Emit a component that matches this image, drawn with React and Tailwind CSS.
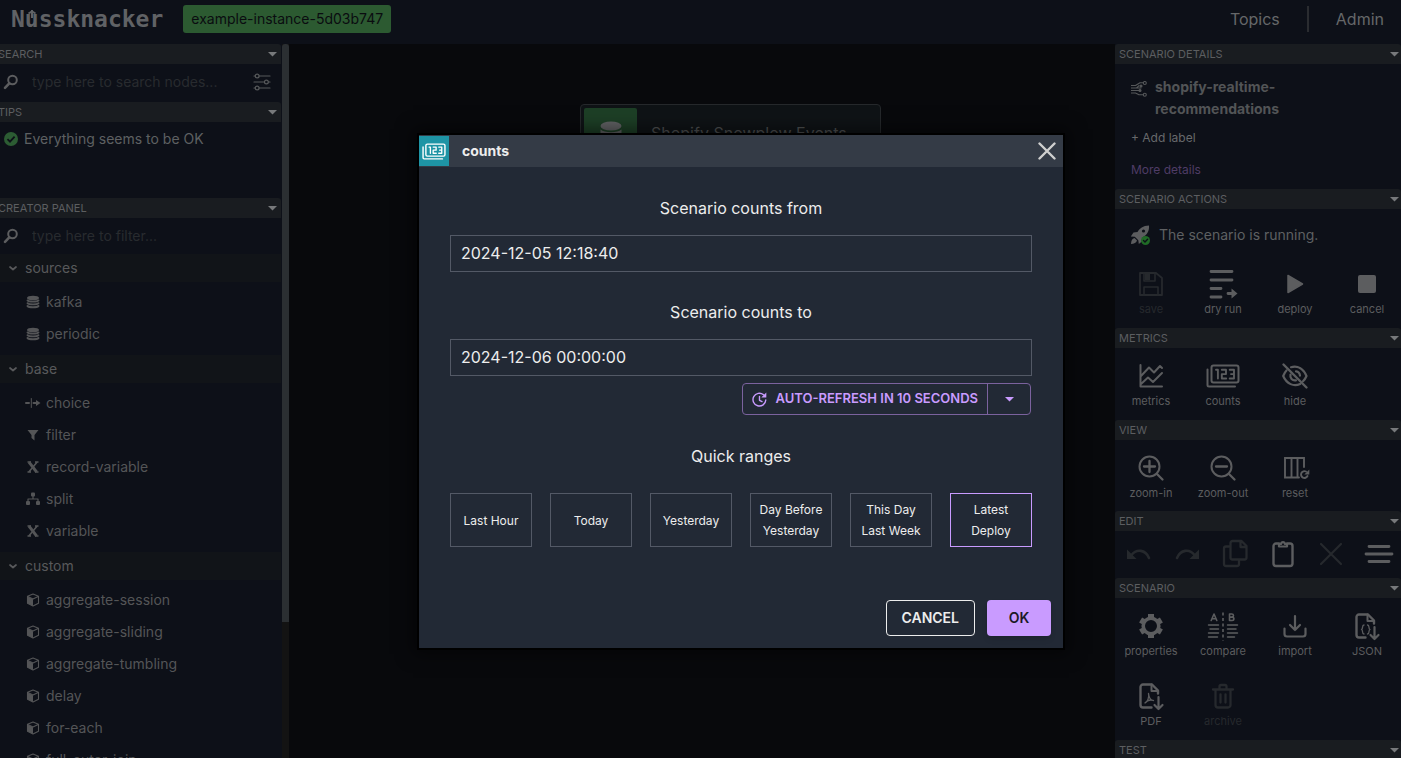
import React from "react";

const S = ({ size = 32, box = "0 0 32 32", children, className = "" }) => (
  <svg
    width={size}
    height={size}
    viewBox={box}
    fill="none"
    stroke="currentColor"
    strokeWidth="2"
    strokeLinecap="round"
    strokeLinejoin="round"
    aria-hidden="true"
    className={"shrink-0 " + className}
  >
    {children}
  </svg>
);

const Caret = ({ className = "" }) => (
  <svg width="9" height="5" viewBox="0 0 9 5" fill="currentColor" aria-hidden="true" className={"shrink-0 " + className}>
    <path d="M0 0h9L4.500 4.500z" />
  </svg>
);

const Magnifier = () => (
  <S size={16} box="0 0 16 16" className="text-[#5c5d5f]">
    <circle cx="9.500" cy="6" r="4.300" />
    <path d="M6.300 9.300 2 13.800" strokeWidth="2.600" />
  </S>
);

const icons = {
  database: (
    <S size={14} box="0 0 14 14">
      <ellipse cx="7" cy="3" rx="6" ry="2.300" fill="currentColor" stroke="none" />
      <path d="M1.500 5.400c1.500 1.600 9.500 1.600 11 0M1.500 8.200c1.500 1.600 9.500 1.600 11 0M1.500 11c1.500 1.600 9.500 1.600 11 0" strokeWidth="1.900" />
    </S>
  ),
  choice: (
    <S size={16} box="0 0 16 16">
      <path d="M1 8h3M8.500 8h4" strokeWidth="2" />
      <path d="M6.300 3.500v9" strokeWidth="1" />
      <path d="M11 5l4.500 3-4.500 3z" fill="currentColor" stroke="none" />
    </S>
  ),
  filter: (
    <S size={14} box="0 0 14 14">
      <path d="M1.500 2h11L8.500 7v5.500L5.500 10V7z" fill="currentColor" stroke="none" />
    </S>
  ),
  variable: (
    <S size={14} box="0 0 14 14">
      <path d="M3 2.200l7.500 9.600" strokeWidth="3" strokeLinecap="butt" />
      <path d="M11 2.200L3 11.800M1.500 2h3.500M9 2h3.500M1.500 12H5M9 12h3.500" strokeWidth="1.600" strokeLinecap="butt" />
    </S>
  ),
  split: (
    <S size={14} box="0 0 14 14">
      <g fill="currentColor" stroke="none">
        <rect x="5" y="0.500" width="4" height="4" rx="1" />
        <rect x="0" y="9" width="4" height="4" rx="1" />
        <rect x="10" y="9" width="4" height="4" rx="1" />
      </g>
      <path d="M7 4v3M2 9.500V7h10v2.500" strokeWidth="1.200" />
    </S>
  ),
  cube: (
    <S size={14} box="0 0 14 14">
      <path d="M7 1l5.500 2.300v6.900L7 13l-5.500-2.800V3.300zM1.800 3.600L7 6l5.200-2.400" strokeWidth="1.100" />
      <path d="M1.300 3.600L7 6.200V13l-5.700-2.800z" fill="currentColor" stroke="none" />
    </S>
  ),
  save: (
    <S>
      <path d="M5 5h16l6 5v17H5z" strokeWidth="1.800" />
      <path d="M9 5v8h11V5M9 27v-8h14v8" strokeWidth="1.600" />
      <path d="M10 6h5v6h-5z" fill="currentColor" stroke="none" />
    </S>
  ),
  dryrun: (
    <S>
      <path d="M4 3.500h21M4 12h21M4 20.500h10M4 29h10M21 25.500h5" strokeWidth="2.800" />
      <path d="M24.500 20.500l6 5-6 5z" fill="currentColor" stroke="none" />
    </S>
  ),
  deploy: (
    <S>
      <path d="M9 7.500v17L23.500 16z" fill="currentColor" strokeWidth="1.500" />
    </S>
  ),
  stop: (
    <S>
      <rect x="7" y="7" width="18" height="18" rx="2" fill="currentColor" stroke="none" />
    </S>
  ),
  metrics: (
    <S>
      <path d="M5.500 5v21.500H27M6 16l8-8.500 5 5L25 6l2 2M6 24l7-6.500 5 4.500 9-9" strokeWidth="2" />
    </S>
  ),
  hide: (
    <S>
      <path d="M4.500 4.500l23 23" strokeWidth="2.400" />
      <path d="M12 7.200c7-2 12.500 1.800 15.500 8.800-.8 2-2 3.800-3.500 5.200M7.500 10.500C6 12 5 13.800 4.200 16c3.500 8 10.500 11 17 8" strokeWidth="2.200" />
      <path d="M17 11.300a4.700 4.700 0 0 1 4 4.300M11.500 14.500c-.8 3.500 1.800 6.500 5.500 5.800" strokeWidth="2.200" />
    </S>
  ),
  zoomin: (
    <S>
      <circle cx="14.500" cy="14.500" r="10" />
      <path d="M22 22l5.500 5.500M9 14.500h11M14.500 9v11" strokeWidth="2.300" />
    </S>
  ),
  zoomout: (
    <S>
      <circle cx="14.500" cy="14.500" r="10" />
      <path d="M22 22l5.500 5.500M9 14.500h11" strokeWidth="2.300" />
    </S>
  ),
  reset: (
    <S>
      <path d="M20 25.500H6V6h19v9M12.500 6v19M18.500 6v19" strokeWidth="1.900" strokeLinejoin="miter" />
      <path d="M28.500 24a3.400 3.400 0 1 1-1.500-4.500" strokeWidth="1.900" />
      <path d="M30.300 17.500v5h-5z" fill="currentColor" stroke="none" />
    </S>
  ),
  undo: (
    <S>
      <path d="M8.500 17c5-6.500 14-5.500 17.500 3" strokeWidth="2.600" />
      <path d="M4 11.500v9.500h9.500z" fill="currentColor" stroke="none" />
    </S>
  ),
  redo: (
    <S>
      <path d="M23.500 17C18.500 10.500 9.500 11.500 6 20" strokeWidth="2.600" />
      <path d="M28 11.500v9.500h-9.500z" fill="currentColor" stroke="none" />
    </S>
  ),
  copy: (
    <S>
      <path d="M13.500 3h9l5 5v11.500a2 2 0 0 1-2 2h-12a2 2 0 0 1-2-2V5a2 2 0 0 1 2-2zM21.500 3.500v5.500H27" strokeWidth="2.300" />
      <path d="M10.500 8.500H7a2 2 0 0 0-2 2V26a2 2 0 0 0 2 2h11a2 2 0 0 0 2-2v-3.500" strokeWidth="2.300" />
    </S>
  ),
  paste: (
    <S>
      <path d="M12 5.500H9a2.500 2.500 0 0 0-2.500 2.500v17.500A2.500 2.500 0 0 0 9 28h14a2.500 2.500 0 0 0 2.500-2.500V8A2.500 2.500 0 0 0 23 5.500h-3" strokeWidth="2.400" />
      <path d="M12 8.500V6h2c.5-2.500 3.500-2.500 4 0h2v2.500z" strokeWidth="2.200" />
    </S>
  ),
  close: (
    <S>
      <path d="M6 6l20 20M26 6L6 26" strokeWidth="2.200" />
    </S>
  ),
  layout: (
    <S>
      <path d="M6 8.500h20M3 16h26M6 23.500h20" strokeWidth="2.800" />
    </S>
  ),
  gear: (
    <S>
      <circle cx="16" cy="16" r="7.800" strokeWidth="3.600" />
      <g strokeWidth="6" strokeLinecap="butt">
        <path d="M16 4v4M16 24v4M5.600 10l3.500 2M22.900 20l3.500 2M5.600 22l3.500-2M22.900 12l3.500-2" />
      </g>
    </S>
  ),
  compare: (
    <S>
      <path d="M16 2.500v28" strokeWidth="1.600" strokeDasharray="3 2.500" strokeLinecap="butt" />
      <path d="M1.500 15h10M3 19h8.500M1.500 23h10M1.500 27h9M20.500 15h10M20.500 19h8.500M20.500 23h10M20.500 27h7" strokeWidth="1.500" />
      <path d="M4.200 10.500L7 4l2.800 6.500M5.200 8.700h3.600M22.500 4v6.500h2.600c2.400 0 2.400-3.400 0-3.400 2-.2 1.800-3.100-.3-3.100zM22.500 7.100h2.500" strokeWidth="1.600" />
    </S>
  ),
  download: (
    <S>
      <path d="M5.500 18.500V24a2.500 2.500 0 0 0 2.500 2.500h16a2.500 2.500 0 0 0 2.500-2.500v-5.500M16 6v14M11 15l5 5 5-5" strokeWidth="2.200" />
    </S>
  ),
  json: (
    <S>
      <path d="M14.500 27.500H8a2.500 2.500 0 0 1-2.500-2.500V7A2.500 2.500 0 0 1 8 4.500h9l6 6v3" strokeWidth="2.400" />
      <path d="M16.500 4.500v6.500H23" strokeWidth="2" />
      <path d="M13 15c-2.500 0-.5 3.700-2.500 4.500 2 .8 0 4.500 2.500 4.500M16.500 15c2.500 0 .5 3.700 2.500 4.500-2 .8 0 4.500-2.500 4.500" strokeWidth="1.300" />
      <path d="M23.500 17v11.500M19.500 25l4 4 4-4" strokeWidth="2.200" />
    </S>
  ),
  pdf: (
    <S>
      <path d="M16.500 27.500H8a2.500 2.500 0 0 1-2.500-2.500V7A2.500 2.500 0 0 1 8 4.500h9l6 6v3" strokeWidth="2.400" />
      <path d="M16.500 4.500v6.500H23" strokeWidth="2" />
      <path d="M13.500 13.500c1 4-1 8-3.500 9.500 2-2.500 5.500-3.500 8.500-2.500-3 0-4.500-2.500-5-7z" strokeWidth="1.300" />
      <path d="M23.500 17v11.500M19.500 25l4 4 4-4" strokeWidth="2.200" />
    </S>
  ),
  trash: (
    <S>
      <path d="M6 9.500h20M8.500 9.500V25a2.500 2.500 0 0 0 2.500 2.500h10a2.500 2.500 0 0 0 2.500-2.500V9.500M12.500 9V6.500A1.500 1.500 0 0 1 14 5h4a1.500 1.500 0 0 1 1.500 1.500V9M13.500 14.500v8M18.500 14.500v8" strokeWidth="2.300" />
    </S>
  ),
};

const Counts = ({ width = 34, height = 24 }) => (
  <svg width={width} height={height} viewBox="0 0 34 24" fill="none" stroke="currentColor" strokeWidth="2" strokeLinecap="round" strokeLinejoin="round" aria-hidden="true">
    <rect x="5.500" y="1.500" width="27" height="17" rx="2" />
    <path d="M1.500 5.500V21a1.500 1.500 0 0 0 1.500 1.500h26" />
    <path d="M10 5.800h1.900v8.700M15.800 5.800h4.200v4.300h-4.200v4.400h4.400M23.700 5.800h4.300v8.700h-4.300M25 10.100h3" strokeWidth="1.900" />
  </svg>
);

const PanelHeader = ({ children }) => (
  <h2 className="flex h-5 items-center justify-between rounded-t-[3px] bg-[#191c20] pb-px pl-1 pr-[2px] text-[11px] leading-4 text-[#5c5e60]">
    <span>{children}</span>
    <Caret className="mt-px text-[#77797b]" />
  </h2>
);

const Tool = ({ icon, label, off }) => (
  <button
    type="button"
    disabled={off}
    className={
      "flex h-[70px] flex-col items-center pt-3 text-[11px] leading-4 " + (off ? "text-[#26292d]" : "text-[#5c5d5f]")
    }
  >
    <span className="flex h-8 items-center">{icon}</span>
    <span className="mt-px">{label}</span>
  </button>
);

const Tools = ({ children, className = "pb-[2px]" }) => (
  <div className={"grid grid-cols-[repeat(4,72px)] " + className}>{children}</div>
);

const groups = [
  ["sources", [["kafka", "database"], ["periodic", "database"]]],
  ["base", [["choice", "choice"], ["filter", "filter"], ["record-variable", "variable"], ["split", "split"], ["variable", "variable"]]],
  [
    "custom",
    [
      ["aggregate-session", "cube"],
      ["aggregate-sliding", "cube"],
      ["aggregate-tumbling", "cube"],
      ["delay", "cube"],
      ["for-each", "cube"],
      ["full-outer-join", "cube"],
    ],
  ],
];

function Logo() {
  return (
    <a href="#home" aria-label="Nussknacker" className="relative block font-['DejaVu_Sans_Mono',monospace] text-[23px] font-bold leading-7 text-[#606265]">
      Nussknacker
      <svg width="12" height="10" viewBox="0 0 12 10" fill="none" stroke="currentColor" strokeWidth="2" aria-hidden="true" className="absolute left-[15px] top-1">
        <path d="M6 9V1M2.500 4.500L6 2.500l3.500 2" />
      </svg>
    </a>
  );
}

function LeftPanel() {
  return (
    <aside className="flex w-[289px] shrink-0 overflow-hidden bg-[#0d1018]">
      <div className="-ml-2 h-full min-w-0 flex-1 overflow-hidden pr-px">
        <div className="[&_h2]:pl-[6px] [&_h2]:pr-1">
          <PanelHeader>SEARCH</PanelHeader>
          <label className="flex h-[38px] items-center pb-[2px] pl-[11px] pr-[10px]">
            <Magnifier />
            <input aria-label="Search nodes" placeholder="type here to search nodes..." className="ml-[13px] min-w-0 flex-1 bg-transparent text-sm text-[#606163] outline-none placeholder:text-[#282b2f]" />
            <S size={18} box="0 0 18 18" className="text-[#56585a]">
              <g strokeWidth="1.200">
                <path d="M1 3h1.500M6 3h11M1 9h10.500M15.500 9H17M1 15h1.500M6 15h11" />
                <circle cx="4.200" cy="3" r="1.900" />
                <circle cx="13.400" cy="9" r="1.900" />
                <circle cx="4.200" cy="15" r="1.900" />
              </g>
            </S>
          </label>
          <PanelHeader>TIPS</PanelHeader>
          <div className="flex h-[76px] items-start pl-3 pt-[7px] text-sm text-[#5e6062]">
            <svg width="14" height="14" viewBox="0 0 14 14" aria-hidden="true" className="mr-[6px] mt-[3px]">
              <circle cx="7" cy="7" r="7" fill="#2c5c33" />
              <path d="M3.500 7.200L6 9.700l4.600-5" fill="none" stroke="#0d1018" strokeWidth="1.800" />
            </svg>
            Everything seems to be OK
          </div>
          <PanelHeader>CREATOR PANEL</PanelHeader>
          <label className="flex h-9 items-center pl-[11px] pr-[10px]">
            <Magnifier />
            <input aria-label="Filter components" placeholder="type here to filter..." className="ml-[13px] min-w-0 flex-1 bg-transparent text-sm text-[#606163] outline-none placeholder:text-[#282b2f]" />
          </label>
          {groups.map(([name, items]) => (
            <section key={name}>
              <h3 className="flex h-7 items-center bg-[#111418] pl-4 text-sm text-[#58595b]">
                <S size={10} box="0 0 10 10" className="mr-[7px]">
                  <path d="M2 4l3 2.500L8 4" strokeWidth="1.700" />
                </S>
                {name}
              </h3>
              <ul className="pb-[5px] pt-1">
                {items.map(([label, icon]) => (
                  <li key={label} className="flex h-8 items-center pl-[33px] text-sm text-[#545557]">
                    <span className="mr-[5px] flex w-4 justify-center">{icons[icon]}</span>
                    {label}
                  </li>
                ))}
              </ul>
            </section>
          ))}
        </div>
      </div>
      <div className="flex w-[7px] shrink-0 flex-col bg-[#131313]">
        <div className="h-[81%] rounded-t-[3px] bg-[#2b2f32]" />
      </div>
    </aside>
  );
}

function RightPanel() {
  return (
    <aside className="w-[286px] shrink-0 overflow-hidden bg-[#0d1018]">
      <PanelHeader>SCENARIO DETAILS</PanelHeader>
      <div className="h-[125px] px-4 pt-3">
        <div className="flex gap-2">
          <S size={16} box="0 0 16 16" className="mt-[5px] text-[#56585a]">
            <g strokeWidth="1.100">
              <path d="M0 4.500h4.500L9 1.800h3M0 7h10M0 9.500h4.500M0 12h4.500l3.500 1.800h4M4 9.500h5M5.500 7L8 4.600" />
              <circle cx="13.800" cy="2" r="1.500" />
              <circle cx="13.800" cy="13.800" r="1.500" />
              <circle cx="10" cy="5" r="1" fill="currentColor" />
              <circle cx="9" cy="9.500" r="1" fill="currentColor" />
            </g>
          </S>
          <h1 className="w-[140px] text-sm font-bold leading-[22px] text-[#525456]">shopify-realtime-recommendations</h1>
        </div>
        <button type="button" className="mt-[7px] block text-xs leading-[22px] text-[#67696b]">+ Add label</button>
        <a href="#details" className="mt-[10px] block text-xs leading-[22px] text-[#4f3c66]">More details</a>
      </div>
      <PanelHeader>SCENARIO ACTIONS</PanelHeader>
      <div className="flex h-[47px] items-center pl-[15px] pt-[5px] text-sm text-[#5e6062]">
        <S size={20} box="0 0 20 20" className="mr-[9px] text-[#5c5d5f]">
          <g fill="currentColor" stroke="none">
            <path d="M19 .5C13 .7 9.500 3.500 7.500 7L3.500 7.600.8 11.500l4 .2 3.500 3.500.5 3.800 3.500-2.800.5-4C17 9.800 19.500 6 19 .5z" />
            <path d="M4.500 13c-2.500.5-3.300 3-3.500 6 3-.3 5.500-1 6-3.500z" />
          </g>
          <circle cx="13.500" cy="6" r="1.600" fill="#0d1018" stroke="none" />
          <circle cx="15.500" cy="15.500" r="4.500" fill="#1f6a26" stroke="none" />
          <path d="M13.500 15.600l1.500 1.400 2.600-2.800" stroke="#0d1018" strokeWidth="1.400" />
        </S>
        The scenario is running.
      </div>
      <Tools>
        <Tool icon={icons.save} label="save" off />
        <Tool icon={icons.dryrun} label="dry run" />
        <Tool icon={icons.deploy} label="deploy" />
        <Tool icon={icons.stop} label="cancel" />
      </Tools>
      <PanelHeader>METRICS</PanelHeader>
      <Tools className="pb-[2px]">
        <Tool icon={icons.metrics} label="metrics" />
        <Tool icon={<Counts />} label="counts" />
        <Tool icon={icons.hide} label="hide" />
      </Tools>
      <PanelHeader>VIEW</PanelHeader>
      <Tools className="pb-px">
        <Tool icon={icons.zoomin} label="zoom-in" />
        <Tool icon={icons.zoomout} label="zoom-out" />
        <Tool icon={icons.reset} label="reset" />
      </Tools>
      <PanelHeader>EDIT</PanelHeader>
      <div className="grid h-[47px] grid-cols-[repeat(6,48px)] items-center justify-items-center pb-px text-[#5c5d5f]">
        <button type="button" aria-label="undo" disabled className="text-[#26292d]">{icons.undo}</button>
        <button type="button" aria-label="redo" disabled className="text-[#26292d]">{icons.redo}</button>
        <button type="button" aria-label="copy" disabled className="text-[#26292d]">{icons.copy}</button>
        <button type="button" aria-label="paste">{icons.paste}</button>
        <button type="button" aria-label="delete" disabled className="text-[#26292d]">{icons.close}</button>
        <button type="button" aria-label="layout">{icons.layout}</button>
      </div>
      <PanelHeader>SCENARIO</PanelHeader>
      <Tools>
        <Tool icon={icons.gear} label="properties" />
        <Tool icon={icons.compare} label="compare" />
        <Tool icon={icons.download} label="import" />
        <Tool icon={icons.json} label="JSON" />
        <Tool icon={icons.pdf} label="PDF" />
        <Tool icon={icons.trash} label="archive" off />
      </Tools>
      <PanelHeader>TEST</PanelHeader>
    </aside>
  );
}

const ranges = [
  ["Last Hour"],
  ["Today"],
  ["Yesterday"],
  ["Day Before", "Yesterday"],
  ["This Day", "Last Week"],
  ["Latest", "Deploy"],
];

const Field = ({ id, label, value }) => (
  <>
    <label htmlFor={id} className="block text-center text-base">{label}</label>
    <input id={id} defaultValue={value} className="mt-[15px] block h-[37px] w-full border border-[#535966] bg-transparent px-[10px] pb-[2px] text-base outline-none" />
  </>
);

function CountsDialog() {
  return (
    <div role="dialog" aria-labelledby="dialog-title" className="absolute left-[417px] top-[133px] w-[648px] border-2 border-black bg-[#222935] text-[#ededed] shadow-[0_0_16px_4px_rgba(0,0,0,0.5)]">
      <header className="flex h-8 items-center bg-[#343b46]">
        <span className="flex h-[30px] w-[30px] items-center justify-center bg-[#1e94a5] text-white">
          <Counts width={24} height={17} />
        </span>
        <h2 id="dialog-title" className="ml-[13px] flex-1 text-sm font-bold">counts</h2>
        <button type="button" aria-label="Close" className="mr-[7px] text-[#cfcfcf]">
          <S size={18} box="0 0 18 18">
            <path d="M1.500 1.500l15 15M16.500 1.500l-15 15" strokeWidth="2.400" />
          </S>
        </button>
      </header>
      <div className="px-[31px] pt-[29px]">
        <Field id="counts-from" label="Scenario counts from" value="2024-12-05 12:18:40" />
        <div className="h-7" />
        <Field id="counts-to" label="Scenario counts to" value="2024-12-06 00:00:00" />
        <div className="mr-px mt-[7px] flex justify-end">
          <div className="flex h-8 rounded border border-[#7b629e] text-[13px] font-semibold text-[#c99bff]">
            <button type="button" className="flex items-center px-[9px]">
              <S size={15} box="0 0 15 15" className="mr-[9px]">
                <path d="M13.800 8A6.400 6.400 0 1 1 11.500 2.700M7.500 4.500v3.800l2.500 1.300" strokeWidth="1.400" />
                <path d="M14.300.5v5h-5z" fill="currentColor" stroke="none" />
              </S>
              AUTO-REFRESH IN 10 SECONDS
            </button>
            <button type="button" aria-label="Refresh options" className="flex w-[43px] items-center justify-center border-l border-[#7b629e]">
              <Caret />
            </button>
          </div>
        </div>
        <p className="mt-[29px] text-center text-base">Quick ranges</p>
        <div className="mt-[25px] grid grid-cols-6 gap-[18px]">
          {ranges.map((lines, i) => (
            <button key={i} type="button" className={"h-[54px] border text-xs leading-[21px] " + (i === 5 ? "border-[#c99bff]" : "border-[#535966]")}>
              {lines.map((line) => (
                <span key={line} className="block">{line}</span>
              ))}
            </button>
          ))}
        </div>
      </div>
      <footer className="flex justify-end gap-3 px-3 pb-3 pt-[53px] text-sm font-semibold">
        <button type="button" className="h-9 rounded border border-[#ededed] px-[15px]">CANCEL</button>
        <button type="button" className="h-9 w-16 rounded bg-[#c99bff] text-[#1d1a26] shadow-md">OK</button>
      </footer>
    </div>
  );
}

export default function App() {
  return (
    <div className="relative flex h-screen flex-col overflow-hidden bg-[#08090c] font-['Inter',sans-serif]">
      <header className="flex h-11 shrink-0 items-center bg-[#0d1018] pb-[6px] pl-[11px] pr-[17px]">
        <Logo />
        <span className="ml-5 flex h-7 items-center rounded-[3px] bg-[#2c5a31] px-2 text-sm text-[#0a0c10]">example-instance-5d03b747</span>
        <nav className="ml-auto flex items-center text-base text-[#656769]">
          <a href="#topics">Topics</a>
          <span className="mx-[27px] h-[26px] w-[2px] bg-[#2a2c30]" />
          <a href="#admin">Admin</a>
        </nav>
      </header>
      <div className="flex min-h-0 flex-1">
        <LeftPanel />
        <main className="relative min-w-0 flex-1">
          <div className="absolute left-[291px] top-[60px] flex h-[60px] w-[301px] rounded border border-[#25282b] bg-[#0f1316] p-[3px] text-base text-[#4d4f50]">
            <span className="flex w-[53px] items-center justify-center rounded-[2px] bg-[#1d3f26] text-[#606163]">
              <svg width="22" height="26" viewBox="0 0 22 26" fill="currentColor" aria-hidden="true">
                <ellipse cx="11" cy="5" rx="10.500" ry="4.500" />
                <path d="M.5 8.500c4 3.500 17 3.500 21 0v4c-4 3.500-17 3.500-21 0zM.5 15c4 3.500 17 3.500 21 0v4c-4 3.500-17 3.500-21 0z" />
              </svg>
            </span>
            <span className="ml-[14px] pt-[13px]">Shopify Snowplow Events</span>
          </div>
        </main>
        <RightPanel />
      </div>
      <CountsDialog />
    </div>
  );
}
